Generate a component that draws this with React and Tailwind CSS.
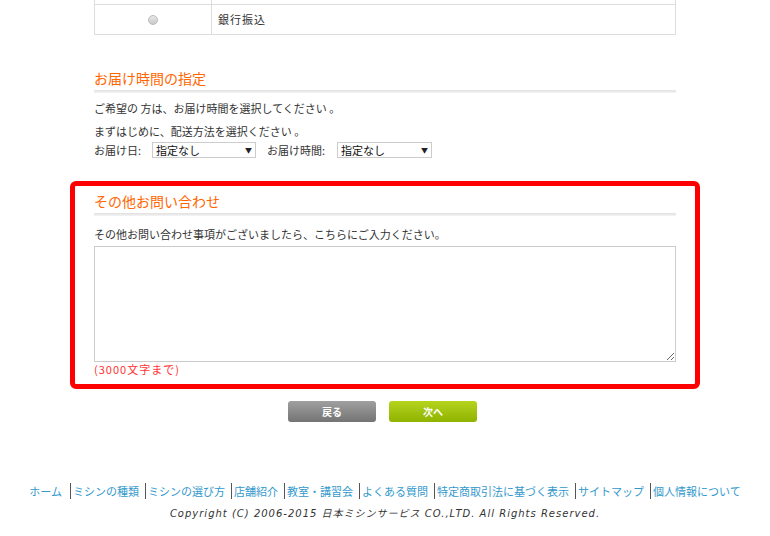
const jp = { fontFamily: '"Noto Sans CJK JP", "Noto Sans", sans-serif' }

const links = ['ホーム', 'ミシンの種類', 'ミシンの選び方', '店舗紹介', '教室・講習会', 'よくある質問', '特定商取引法に基づく表示', 'サイトマップ', '個人情報について']

function Heading({ children }) {
  return (
    <div>
      <h2 className="text-[14px] leading-[18px] text-[#ff6600]">{children}</h2>
      <div className="mt-[3px] h-[3px] bg-gradient-to-b from-[#e0e0e0] to-[#f4f4f4]" />
    </div>
  )
}

function FakeSelect({ w }) {
  return (
    <div className={`${w} h-[16px] border border-[#cccccc] bg-white flex items-center justify-between px-[3px]`}>
      <span className="text-[11px] leading-[14px] text-[#111]">指定なし</span>
      <span className="text-[7px] leading-none text-[#222]">▼</span>
    </div>
  )
}

export default function App() {
  return (
    <div className="w-[770px] h-[536px] bg-white text-[#333] overflow-hidden" style={jp}>
      <div className="w-[630px] mx-auto">
        <div className="px-[24px]">
          {/* payment table, last rows */}
          <div className="border-x border-b border-[#dddddd]">
            <div className="flex h-[5px] border-b border-[#dddddd]">
              <div className="w-[117px] border-r border-[#dddddd]" />
            </div>
            <div className="flex h-[29px]">
              <div className="w-[117px] border-r border-[#dddddd] flex items-center justify-center">
                <span className="w-[10px] h-[10px] rounded-full border border-[#bbbbbb] bg-gradient-to-b from-[#e8e8e8] to-[#c9c9c9]" />
              </div>
              <div className="flex items-center pl-[6px] text-[11px] tracking-[1px]">銀行振込</div>
            </div>
          </div>

          <div className="mt-[34px]">
            <Heading>お届け時間の指定</Heading>
          </div>
          <p className="mt-[7px] text-[11px] leading-[16px]">ご希望の 方は、お届け時間を選択してください 。</p>
          <p className="mt-[7px] text-[11px] leading-[16px]">まずはじめに、配送方法を選択ください 。</p>
          <div className="mt-[3px] flex items-center text-[11px] leading-[16px]">
            <span className="w-[58px]">お届け日:</span>
            <FakeSelect w="w-[104px]" />
            <span className="ml-[11px] w-[70px]">お届け時間:</span>
            <FakeSelect w="w-[95px]" />
          </div>
        </div>

        {/* other inquiries */}
        <div className="mt-[23px] border-[5px] border-[#ff0000] rounded-[6px] px-[19px] pt-[6px] pb-[8px]">
          <Heading>その他お問い合わせ</Heading>
          <p className="mt-[10px] text-[11px] leading-[16px]">その他お問い合わせ事項がございましたら、こちらにご入力ください。</p>
          <textarea className="mt-[4px] block w-full h-[116px] border border-[#cccccc] outline-none" />
          <p className="text-[11px] leading-[14px] tracking-[1px] text-[#ff3333]">(3000文字まで)</p>
        </div>

        <div className="mt-[12px] flex justify-center gap-[13px] pr-[5px]">
          <button className="w-[88px] h-[21px] rounded-[3px] bg-gradient-to-b from-[#a0a0a0] to-[#747474] text-white text-[10px] font-bold">戻る</button>
          <button className="w-[88px] h-[21px] rounded-[3px] bg-gradient-to-b from-[#b5d41c] to-[#8fb300] text-white text-[10px] font-bold">次へ</button>
        </div>
      </div>

      <footer className="mt-[61px]">
        <ul className="flex justify-center text-[11px] leading-[16px] text-[#3399cc]">
          {links.map((l, i) => (
            <li key={l} className={i === 0 ? 'pr-[8px]' : 'border-l border-[#555] pl-[2px] pr-[6px] last:pr-0'}>
              {l}
            </li>
          ))}
        </ul>
        <p className="mt-[8px] text-center italic text-[10px] leading-[14px] tracking-[1px] text-[#333]" style={{ fontFamily: '"DejaVu Sans", "Noto Sans CJK JP", sans-serif' }}>
          Copyright (C) 2006-2015 日本ミシンサービス CO.,LTD. All Rights Reserved.
        </p>
      </footer>
    </div>
  )
}
